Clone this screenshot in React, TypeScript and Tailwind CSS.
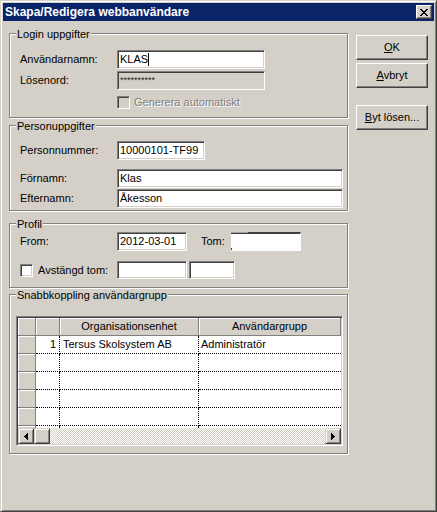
import type { ReactNode } from 'react'

// classic 3D edges
const sunken = 'border border-t-[#808080] border-l-[#808080] border-r-white border-b-white shadow-[inset_1px_1px_0_#404040,inset_-1px_-1px_0_#d4d0c8]'
const raised = 'border border-t-white border-l-white border-r-[#404040] border-b-[#404040] shadow-[inset_-1px_-1px_0_#808080]'
const scrollBtn = 'border border-t-[#d4d0c8] border-l-[#d4d0c8] border-r-[#404040] border-b-[#404040] shadow-[inset_1px_1px_0_#fff,inset_-1px_-1px_0_#808080] bg-[#d4d0c8]'

function Group({ title, className, children }: { title: string, className?: string, children?: ReactNode }) {
  return (
    <div className={`relative border border-[#808080] shadow-[inset_1px_1px_0_#fff,1px_1px_0_#fff] ${className ?? ''}`}>
      <span className="absolute left-[6px] -top-[6px] bg-[#d4d0c8] px-[1px] leading-[13px]">{title}</span>
      {children}
    </div>
  )
}

function Edit({ className, children, disabled }: { className?: string, children?: ReactNode, disabled?: boolean }) {
  return (
    <div className={`${sunken} ${disabled ? 'bg-[#d4d0c8]' : 'bg-white'} flex items-center pl-[2px] leading-[13px] whitespace-nowrap overflow-hidden ${className ?? ''}`}>
      {children}
    </div>
  )
}

function Check({ disabled }: { disabled?: boolean }) {
  return <div className={`${sunken} w-[13px] h-[13px] shrink-0 ${disabled ? 'bg-[#d4d0c8]' : 'bg-white'}`} />
}

function Button({ children, className }: { children: ReactNode, className?: string }) {
  return (
    <div className={`${raised} bg-[#d4d0c8] w-[72px] h-[25px] flex items-center justify-center leading-[13px] ${className ?? ''}`}>
      {children}
    </div>
  )
}

function Arrow({ dir }: { dir: 'left' | 'right' }) {
  return (
    <svg width="4" height="7" viewBox="0 0 4 7" shapeRendering="crispEdges">
      <polygon points={dir === 'left' ? '4,0 4,7 0,3.5' : '0,0 0,7 4,3.5'} fill="#000" />
    </svg>
  )
}

function CloseGlyph() {
  const px = [
    [0, 0], [1, 0], [6, 0], [7, 0],
    [1, 1], [2, 1], [5, 1], [6, 1],
    [2, 2], [3, 2], [4, 2], [5, 2],
    [3, 3], [4, 3],
    [2, 4], [3, 4], [4, 4], [5, 4],
    [1, 5], [2, 5], [5, 5], [6, 5],
    [0, 6], [1, 6], [6, 6], [7, 6],
  ]
  return (
    <svg width="8" height="7" viewBox="0 0 8 7" shapeRendering="crispEdges">
      {px.map(([x, y], i) => <rect key={i} x={x} y={y} width="1" height="1" fill="#000" />)}
    </svg>
  )
}

const rows = [
  { n: '1', org: 'Tersus Skolsystem AB', grp: 'Administratör' },
  { n: '', org: '', grp: '' },
  { n: '', org: '', grp: '' },
  { n: '', org: '', grp: '' },
  { n: '', org: '', grp: '' },
  { n: '', org: '', grp: '' },
]

export default function App() {
  return (
    <div className="w-[437px] h-[512px] bg-[#d4d0c8] border border-t-[#d4d0c8] border-l-[#d4d0c8] border-r-[#404040] border-b-[#404040] shadow-[inset_1px_1px_0_#fff,inset_-1px_-1px_0_#808080] p-[2px] text-[11px] text-black font-['Liberation_Sans',Arial,sans-serif] overflow-hidden select-none">
      {/* Title bar */}
      <div className="h-[18px] bg-[#0a246a] flex items-center justify-between pl-[2px] pr-[2px]">
        <span className="text-white font-bold text-[12px] leading-[14px]">Skapa/Redigera webbanvändare</span>
        <div className={`${raised} bg-[#d4d0c8] w-[16px] h-[14px] flex items-center justify-center`}>
          <CloseGlyph />
        </div>
      </div>

      <div className="flex pl-[6px] pt-[12px]">
        {/* Left column */}
        <div className="w-[339px] flex flex-col">
          <Group title="Login uppgifter" className="h-[85px]">
            <div className="pl-[10px] pt-[16px]">
              <div className="flex items-center h-[19px]">
                <span className="w-[97px]">Användarnamn:</span>
                <Edit className="w-[148px] h-[19px]">
                  KLAS<span className="inline-block w-px h-[13px] bg-black" />
                </Edit>
              </div>
              <div className="flex items-center h-[19px] mt-[2px]">
                <span className="w-[97px]">Lösenord:</span>
                <Edit disabled className="w-[148px] h-[19px] text-[9px] text-[#202020]">**********</Edit>
              </div>
              <div className="flex items-center h-[13px] mt-[6px] pl-[97px] gap-[4px]">
                <Check disabled />
                <span className="text-[#808080] [text-shadow:1px_1px_0_#fff]">Generera automatiskt</span>
              </div>
            </div>
          </Group>

          <Group title="Personuppgifter" className="h-[86px] mt-[7px]">
            <div className="pl-[10px] pt-[15px]">
              <div className="flex items-center h-[19px]">
                <span className="w-[97px]">Personnummer:</span>
                <Edit className="w-[88px] h-[19px]">10000101-TF99</Edit>
              </div>
              <div className="flex items-center h-[19px] mt-[9px]">
                <span className="w-[97px]">Förnamn:</span>
                <Edit className="w-[226px] h-[19px]">Klas</Edit>
              </div>
              <div className="flex items-center h-[19px] mt-[1px]">
                <span className="w-[97px]">Efternamn:</span>
                <Edit className="w-[226px] h-[19px]">Åkesson</Edit>
              </div>
            </div>
          </Group>

          <Group title="Profil" className="h-[65px] mt-[12px]">
            <div className="pl-[10px] pt-[8px]">
              <div className="flex items-center h-[19px]">
                <span className="w-[97px]">From:</span>
                <Edit className="w-[70px] h-[19px]">2012-03-01</Edit>
                <span className="ml-[14px] w-[30px]">Tom:</span>
                {/* partially painted date field */}
                <div className="relative w-[70px] h-[19px] bg-white border-t-2 border-t-[#404040] border-r border-r-white border-b border-b-white">
                  <span className="absolute left-0 -top-[2px] w-[17px] h-px bg-[#a0a0a0]" />
                  <span className="absolute left-0 top-0 w-[17px] h-px bg-white" />
                  <span className="absolute left-0 bottom-0 w-px h-[2px] bg-[#404040]" />
                </div>
              </div>
              <div className="flex items-center h-[18px] mt-[10px]">
                <Check />
                <span className="ml-[5px] w-[79px]">Avstängd tom:</span>
                <Edit className="w-[70px] h-[18px]" />
                <Edit className="w-[46px] h-[18px] ml-[2px]" />
              </div>
            </div>
          </Group>

          <Group title="Snabbkoppling användargrupp" className="h-[160px] mt-[6px]">
            <div className="pl-[6px] pt-[21px]">
              <div className={`${sunken} w-[327px] h-[130px] p-px bg-white`}>
                <div className="h-full flex flex-col">
                  {/* header */}
                  <div className="flex h-[18px] shrink-0 bg-[#d4d0c8]">
                    <div className="w-[18px] border-r border-b border-[#808080] shadow-[inset_1px_1px_0_#fff]" />
                    <div className="w-[24px] border-r border-b border-[#808080] shadow-[inset_1px_1px_0_#fff]" />
                    <div className="w-[139px] border-r border-b border-[#808080] shadow-[inset_1px_1px_0_#fff] flex items-center justify-center leading-[13px]">Organisationsenhet</div>
                    <div className="flex-1 border-r border-b border-[#808080] shadow-[inset_1px_1px_0_#fff] flex items-center justify-center leading-[13px]">Användargrupp</div>
                  </div>
                  {/* rows */}
                  <div className="flex-1 overflow-hidden">
                    {rows.map((r, i) => (
                      <div key={i} className="flex h-[18px] leading-[13px]">
                        <div className="w-[18px] bg-[#d4d0c8] border-r border-b border-[#808080] shadow-[inset_1px_1px_0_#fff]" />
                        <div className="w-[24px] border-r border-b border-dotted border-black flex items-center justify-end pr-[3px]">{r.n}</div>
                        <div className="w-[139px] border-r border-b border-dotted border-black flex items-center pl-[3px] whitespace-nowrap">{r.org}</div>
                        <div className="flex-1 border-b border-dotted border-black flex items-center pl-[2px] whitespace-nowrap">{r.grp}</div>
                      </div>
                    ))}
                  </div>
                  {/* horizontal scrollbar */}
                  <div className="flex h-[16px] shrink-0">
                    <div className={`${scrollBtn} w-[16px] flex items-center justify-center`}><Arrow dir="left" /></div>
                    <div className={`${scrollBtn} w-[16px]`} />
                    <div className="flex-1 bg-[repeating-conic-gradient(#d4d0c8_0_25%,#fff_0_50%)] bg-[length:2px_2px]" />
                    <div className={`${scrollBtn} w-[16px] flex items-center justify-center`}><Arrow dir="right" /></div>
                  </div>
                </div>
              </div>
            </div>
          </Group>
        </div>

        {/* Right column */}
        <div className="ml-[8px] mt-[2px] flex flex-col">
          <Button><span className="underline underline-offset-[1px]">O</span>K</Button>
          <Button className="mt-[3px]"><span className="underline underline-offset-[1px]">A</span>vbryt</Button>
          <Button className="mt-[17px]"><span className="underline underline-offset-[1px]">B</span>yt lösen...</Button>
        </div>
      </div>
    </div>
  )
}
